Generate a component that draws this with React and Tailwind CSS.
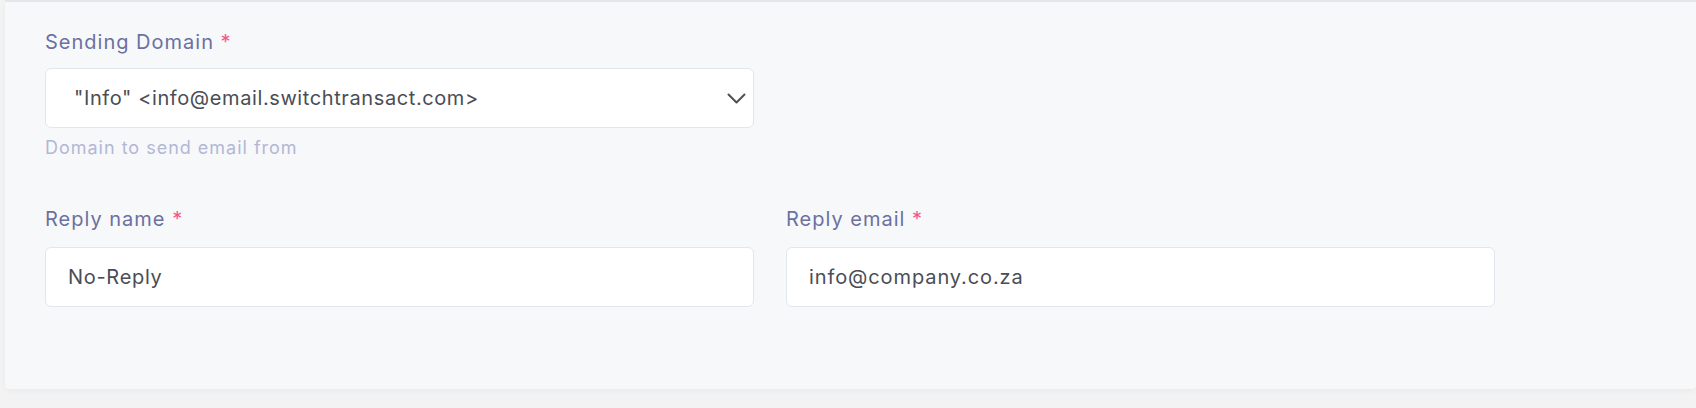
import { useState } from 'react'

function Label({ children }) {
  return (
    <label className="block text-[20px] leading-[28px] tracking-[0.05em] text-[#6b70a1]">
      {children} <span className="text-[#f2578b]">*</span>
    </label>
  )
}

function Chevron() {
  return (
    <svg width="19" height="11" viewBox="0 0 19 11" fill="none" className="shrink-0">
      <path d="M1.5 1.5 L9.5 9.5 L17.5 1.5" stroke="#4b5059" strokeWidth="2" strokeLinecap="round" strokeLinejoin="round" />
    </svg>
  )
}

export default function App() {
  const [replyName, setReplyName] = useState('No-Reply')
  const [replyEmail, setReplyEmail] = useState('info@company.co.za')

  return (
    <div className="h-[408px] bg-[#f3f3f4] font-['Inter',sans-serif]">
      <div className="ml-[5px] h-[389px] rounded-b border-t-2 border-[#e4e6ea] bg-[#f7f8fa] pt-[26px] pl-[40px] shadow-[0_2px_6px_rgba(0,0,0,0.04)]">
        <div className="w-[1450px]">
          {/* Sending domain */}
          <div className="w-[709px]">
            <Label>Sending Domain</Label>
            <div className="mt-[12px] flex h-[60px] items-center justify-between rounded-md border border-[#e3e6ee] bg-white pl-[28px] pr-[7px]">
              <span className="text-[20px] tracking-[0.03em] text-[#4a4d55]">"Info" &lt;info@email.switchtransact.com&gt;</span>
              <Chevron />
            </div>
            <p className="mt-[8px] text-[18px] leading-[24px] tracking-[0.055em] text-[#b3b7d5]">Domain to send email from</p>
          </div>

          {/* Reply fields */}
          <div className="mt-[45px] grid grid-cols-2 gap-x-[32px]">
            <div>
              <Label>Reply name</Label>
              <input
                value={replyName}
                onChange={(e) => setReplyName(e.target.value)}
                className="mt-[14px] block h-[60px] w-full rounded-md border border-[#e3e6ee] bg-white px-[22px] text-[20px] tracking-[0.035em] text-[#4a4d55] outline-none"
              />
            </div>
            <div>
              <Label>Reply email</Label>
              <input
                value={replyEmail}
                onChange={(e) => setReplyEmail(e.target.value)}
                className="mt-[14px] block h-[60px] w-full rounded-md border border-[#e3e6ee] bg-white px-[22px] text-[20px] tracking-[0.045em] text-[#4a4d55] outline-none"
              />
            </div>
          </div>
        </div>
      </div>
    </div>
  )
}
